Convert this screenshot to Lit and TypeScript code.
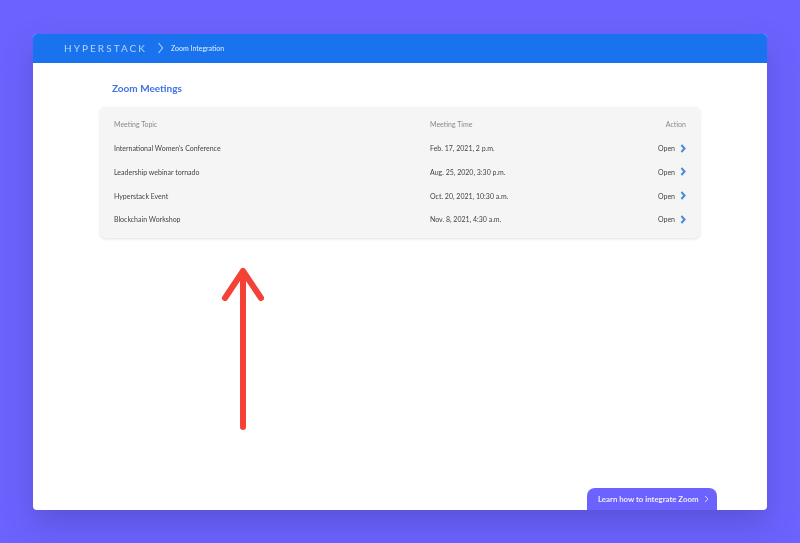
import { css, html, LitElement, TemplateResult } from "lit";
import { customElement } from "lit/decorators.js";

interface Meeting {
    topic: string;
    time: string;
}

const MEETINGS: Meeting[] = [
    { topic: "International Women's Conference", time: "Feb. 17, 2021, 2 p.m." },
    { topic: "Leadership webinar tornado", time: "Aug. 25, 2020, 3:30 p.m." },
    { topic: "Hyperstack Event", time: "Oct. 20, 2021, 10:30 a.m." },
    { topic: "Blockchain Workshop", time: "Nov. 8, 2021, 4:30 a.m." },
];

@customElement("app-root")
export class AppRoot extends LitElement {
    protected render(): TemplateResult {
        return html`
            <div class="window">
                <header class="topbar">
                    <span class="brand">HYPERSTACK</span>
                    <svg class="crumb" width="8" height="12" viewBox="0 0 8 12">
                        <path d="M1.5 1 L5.5 6 L1.5 11" fill="none" stroke="#a9cbfa" stroke-width="1.2" />
                    </svg>
                    <span class="page-name">Zoom Integration</span>
                </header>
                <main class="content">
                    <h1 class="title">Zoom Meetings</h1>
                    <div class="card">
                        <div class="row head">
                            <span>Meeting Topic</span>
                            <span>Meeting Time</span>
                            <span class="action">Action</span>
                        </div>
                        ${MEETINGS.map(
                            (m) => html`
                                <div class="row">
                                    <span>${m.topic}</span>
                                    <span>${m.time}</span>
                                    <span class="action">
                                        Open
                                        <svg width="6" height="9" viewBox="0 0 6 9">
                                            <path d="M1.4 1 L4.6 4.5 L1.4 8" fill="none" stroke="#4a8cdc" stroke-width="2" />
                                        </svg>
                                    </span>
                                </div>
                            `
                        )}
                    </div>
                </main>
                <a class="learn">
                    Learn how to integrate Zoom
                    <svg width="5" height="8" viewBox="0 0 5 8">
                        <path d="M1 1 L4 4 L1 7" fill="none" stroke="#d6d3ff" stroke-width="1" />
                    </svg>
                </a>
            </div>
            <svg class="arrow" width="44" height="166" viewBox="0 0 44 166">
                <path
                    d="M22 160 L22 4 M4 31 L22 4 L40 31"
                    fill="none"
                    stroke="#f44336"
                    stroke-width="6"
                    stroke-linecap="round"
                    stroke-linejoin="round"
                />
            </svg>
        `;
    }

    static styles = css`
        :host {
            display: block;
            position: relative;
            width: 800px;
            height: 543px;
            padding: 34px 33px 33px;
            box-sizing: border-box;
            background: #6c63ff;
            font-family: "Lato", "Liberation Sans", sans-serif;
            overflow: hidden;
        }
        .window {
            position: relative;
            height: 476px;
            background: #fff;
            border-radius: 4px;
            overflow: hidden;
            box-shadow: 0 14px 30px rgba(50, 45, 130, 0.3);
            display: flex;
            flex-direction: column;
            will-change: transform;
        }
        .topbar {
            height: 29px;
            box-sizing: border-box;
            padding: 0 0 2px 31px;
            flex: none;
            background: #1a73ee;
            display: flex;
            align-items: center;
        }
        .brand {
            font-size: 10px;
            letter-spacing: 2.05px;
            color: #b7d3fb;
        }
        .crumb {
            margin-left: 10px;
        }
        .page-name {
            margin-left: 6px;
            font-size: 7px;
            color: #e4effe;
        }
        .content {
            padding: 0 67px;
        }
        .title {
            margin: 18px 0 0 12px;
            font-size: 10px;
            line-height: 14px;
            font-weight: 700;
            color: #3c73e0;
        }
        .card {
            margin-top: 12px;
            height: 131px;
            box-sizing: border-box;
            padding: 5.4px 14px 5px;
            background: #f5f5f5;
            border-radius: 5px;
            box-shadow: 0 1px 3px rgba(0, 0, 0, 0.12);
        }
        .row {
            display: grid;
            grid-template-columns: 316px 1fr 90px;
            height: 23.8px;
            align-items: center;
            font-size: 7px;
            color: #444;
        }
        .head {
            color: #8a8a8a;
        }
        .action {
            display: flex;
            justify-content: flex-end;
            align-items: center;
            gap: 5px;
        }
        .learn {
            position: absolute;
            right: 50px;
            bottom: 0;
            width: 130px;
            height: 22px;
            box-sizing: border-box;
            padding-left: 11px;
            display: flex;
            align-items: center;
            gap: 6px;
            background: #6c63ff;
            border-radius: 8px 8px 0 0;
            font-size: 7.8px;
            font-weight: 700;
            color: #eeedff;
        }
        .arrow {
            position: absolute;
            left: 221.4px;
            top: 267px;
        }
    `;
}
